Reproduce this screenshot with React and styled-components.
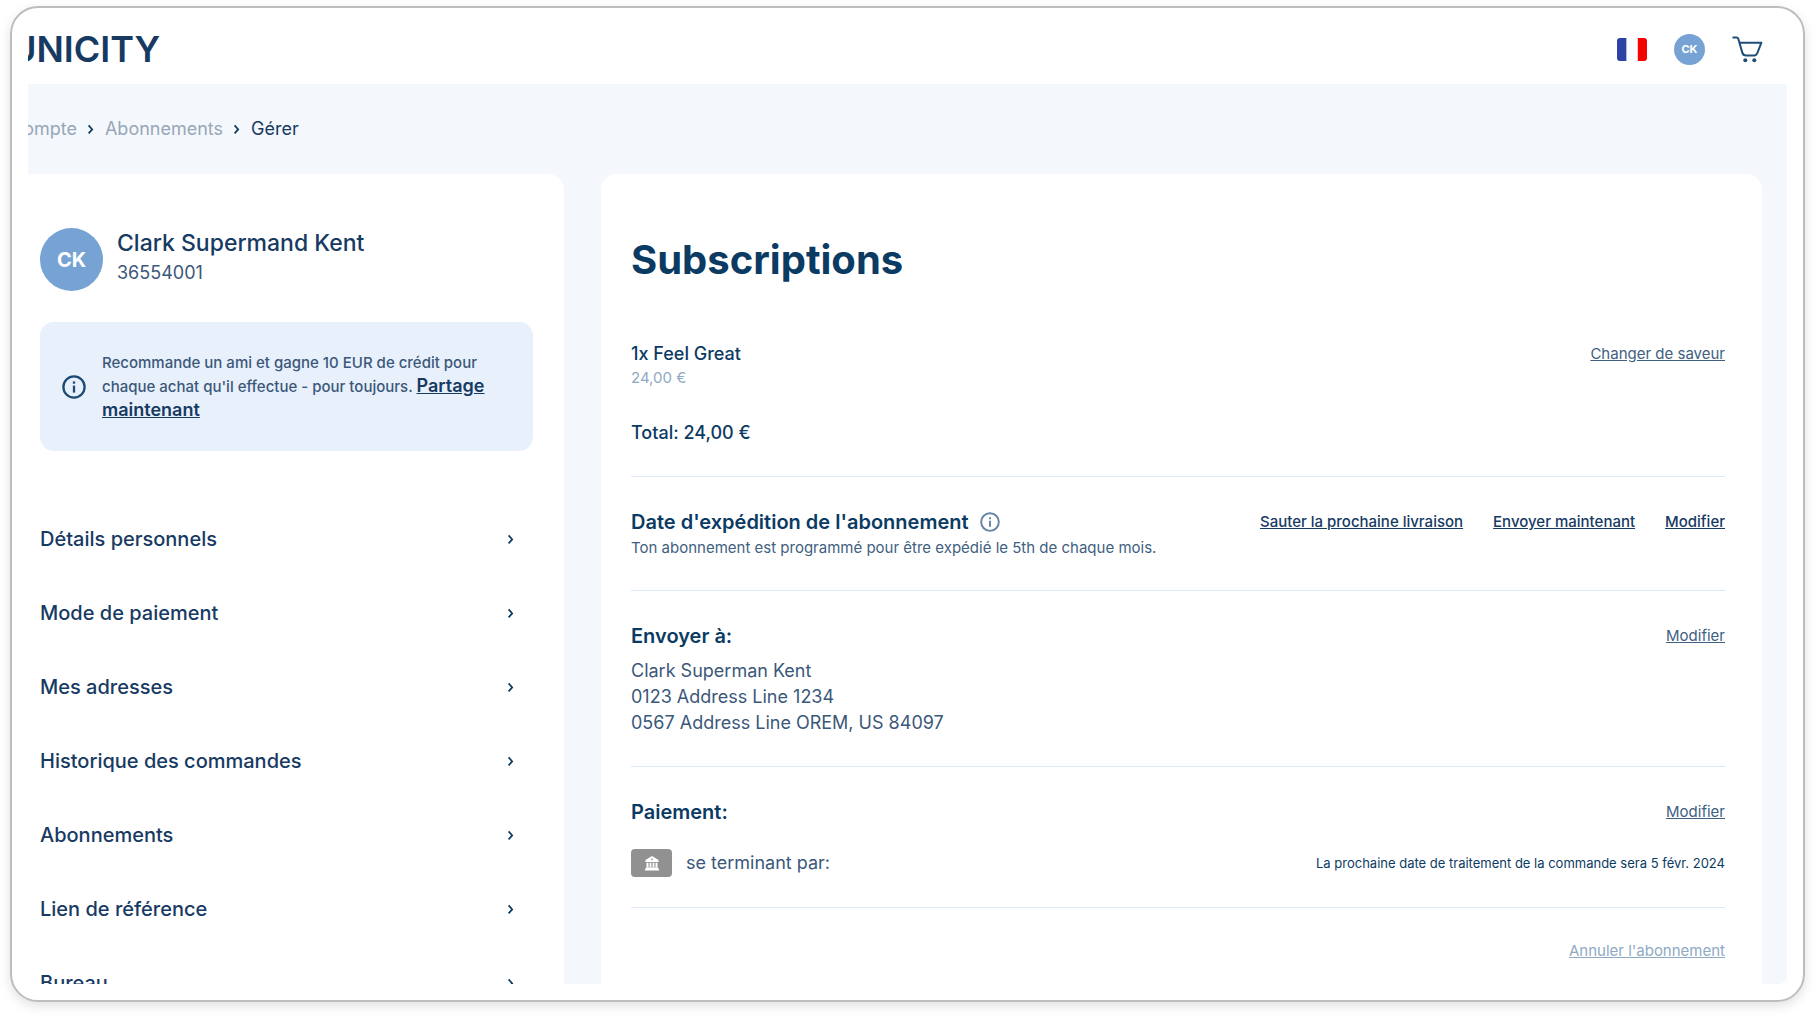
import React from 'react';
import styled, { createGlobalStyle } from 'styled-components';

const navy = '#173a63';
const navyDeep = '#0b3b63';
const slate = '#3b587a';
const muted = '#8fa9c4';

const menuItems = [
  'Détails personnels',
  'Mode de paiement',
  'Mes adresses',
  'Historique des commandes',
  'Abonnements',
  'Lien de référence',
  'Bureau',
];

const address = [
  'Clark Superman Kent',
  '0123 Address Line 1234',
  '0567 Address Line OREM, US 84097',
];

const GlobalStyle = createGlobalStyle`
  * {
    box-sizing: border-box;
  }

  body {
    margin: 0;
    background: #fff;
    color: ${navy};
    font-family: Inter, "Liberation Sans", sans-serif;
  }

  h1, h2, h3, p, ul, ol, address {
    margin: 0;
    padding: 0;
    font-style: normal;
    list-style: none;
  }

  button {
    padding: 0;
    border: none;
    background: none;
    color: inherit;
    font-family: inherit;
    cursor: pointer;
  }

  svg {
    display: block;
    flex-shrink: 0;
  }
`;

const ChevronIcon = () => (
  <svg width="8" height="12" viewBox="0 0 8 12" fill="none" stroke={navyDeep} strokeWidth="1.7">
    <path d="M1.6 2.4 L5.2 6.4 L1.6 10.4" />
  </svg>
);

const InfoIcon = ({ size, color }) => (
  <svg width={size} height={size} viewBox="0 0 24 24" fill="none" stroke={color} strokeWidth="2.3">
    <circle cx="12" cy="12" r="10.6" />
    <path d="M12 10.6 V17.6" />
    <path d="M12 6.4 V8.7" />
  </svg>
);

const FlagIcon = () => (
  <svg width="30" height="23" viewBox="0 0 30 23">
    <path d="M3 0 H9.6 V23 H3 A3 3 0 0 1 0 20 V3 A3 3 0 0 1 3 0 Z" fill="#2e42a5" />
    <path d="M9.6 0 H20.8 V23 H9.6 Z" fill="#f7fcff" />
    <path d="M20.8 0 H27 A3 3 0 0 1 30 3 V20 A3 3 0 0 1 27 23 H20.8 Z" fill="#f50100" />
  </svg>
);

const CartIcon = () => (
  <svg width="31" height="27" viewBox="0 0 31 27" fill="none" stroke="#1f4e79" strokeWidth="2">
    <path d="M0.5 1.5 H4.6 Q5.9 1.5 6.3 2.8 L10.3 16.6 Q11.1 19.4 14 19.4 H22.2 Q24.4 19.4 25.3 17.2 L29.4 6.7 H7.5" strokeLinejoin="round" />
    <circle cx="13.3" cy="24.3" r="2" fill="#1f4e79" stroke="none" />
    <circle cx="22.3" cy="24.3" r="2" fill="#1f4e79" stroke="none" />
  </svg>
);

const BankIcon = () => (
  <svg width="14" height="15" viewBox="0 0 14 15" fill="#fff">
    <path d="M7 0 L13.5 4 V6 H0.5 V4 Z" />
    <path d="M1.5 6.8 H3.5 V11.4 H1.5 Z M4.6 6.8 H6.4 V11.4 H4.6 Z M7.6 6.8 H9.4 V11.4 H7.6 Z M10.5 6.8 H12.5 V11.4 H10.5 Z" />
    <path d="M0.8 11.6 H13.2 V12.8 H14 V14.4 H0 V12.8 H0.8 Z" />
    <circle cx="7" cy="3.4" r="0.8" fill="#919191" />
  </svg>
);

function App() {
  return (
    <Frame>
      <GlobalStyle />
      <Viewport>
        <Page>
          <Header>
            <Logo href="#">UNICITY</Logo>
            <HeaderActions>
              <button type="button" aria-label="France"><FlagIcon /></button>
              <Avatar as="button" type="button" $size={31} $font={11}>CK</Avatar>
              <button type="button" aria-label="Panier"><CartIcon /></button>
            </HeaderActions>
          </Header>
          <Main>
            <Breadcrumb aria-label="breadcrumb">
              <Crumb href="#">Compte</Crumb>
              <ChevronIcon />
              <Crumb href="#">Abonnements</Crumb>
              <ChevronIcon />
              <Crumb href="#" $current aria-current="page">Gérer</Crumb>
            </Breadcrumb>
            <Columns>
              <Sidebar>
                <Profile>
                  <Avatar $size={63} $font={20}>CK</Avatar>
                  <div>
                    <ProfileName>Clark Supermand Kent</ProfileName>
                    <ProfileId>36554001</ProfileId>
                  </div>
                </Profile>
                <Notice>
                  <InfoIcon size={24} color="#1b4a75" />
                  <p>
                    Recommande un ami et gagne 10 EUR de crédit pour chaque achat qu'il effectue - pour toujours.{' '}
                    <a href="#">Partage maintenant</a>
                  </p>
                </Notice>
                <ul>
                  {menuItems.map((item) => (
                    <li key={item}>
                      <MenuLink href="#">
                        {item}
                        <ChevronIcon />
                      </MenuLink>
                    </li>
                  ))}
                </ul>
              </Sidebar>
              <Content>
                <Title>Subscriptions</Title>
                <Section $first>
                  <Row>
                    <Product>1x Feel Great</Product>
                    <TextLink href="#">Changer de saveur</TextLink>
                  </Row>
                  <Price>24,00 €</Price>
                  <Total>Total: 24,00 €</Total>
                </Section>
                <Section>
                  <Row>
                    <SectionTitle>
                      Date d'expédition de l'abonnement
                      <InfoIcon size={20} color="#6485a5" />
                    </SectionTitle>
                    <Links>
                      <TextLink href="#" $strong>Sauter la prochaine livraison</TextLink>
                      <TextLink href="#" $strong>Envoyer maintenant</TextLink>
                      <TextLink href="#" $strong>Modifier</TextLink>
                    </Links>
                  </Row>
                  <Schedule>Ton abonnement est programmé pour être expédié le 5th de chaque mois.</Schedule>
                </Section>
                <Section>
                  <Row>
                    <SectionTitle>Envoyer à:</SectionTitle>
                    <TextLink href="#">Modifier</TextLink>
                  </Row>
                  <Address>
                    {address.map((line) => (
                      <div key={line}>{line}</div>
                    ))}
                  </Address>
                </Section>
                <Section>
                  <Row>
                    <SectionTitle>Paiement:</SectionTitle>
                    <TextLink href="#">Modifier</TextLink>
                  </Row>
                  <PaymentRow>
                    <Payment>
                      <BankBadge><BankIcon /></BankBadge>
                      se terminant par:
                    </Payment>
                    <NextDate>La prochaine date de traitement de la commande sera 5 févr. 2024</NextDate>
                  </PaymentRow>
                </Section>
                <Footer>
                  <TextLink href="#" $muted>Annuler l'abonnement</TextLink>
                </Footer>
              </Content>
            </Columns>
          </Main>
        </Page>
      </Viewport>
    </Frame>
  );
}

const Frame = styled.div`
  display: flex;
  height: calc(100vh - 20px);
  margin: 6px 11px 14px 10px;
  padding: 0 16px 16px;
  border: 2px solid #bdbdbd;
  border-radius: 28px;
  box-shadow: 0 4px 12px rgba(0, 0, 0, 0.12);
`;

const Viewport = styled.div`
  flex: 1;
  min-width: 0;
  overflow: hidden;
  border-bottom-right-radius: 8px;
`;

/* the page is scrolled slightly to the right inside its window */
const Page = styled.div`
  display: flex;
  flex-direction: column;
  min-height: 100%;
  margin-left: -18px;
`;

const Header = styled.header`
  display: flex;
  align-items: center;
  justify-content: space-between;
  height: 76px;
  padding: 6px 24px 0 0;
`;

const Logo = styled.a`
  color: ${navy};
  font-size: 36px;
  font-weight: 600;
  line-height: 40px;
  text-decoration: none;
`;

const HeaderActions = styled.div`
  display: flex;
  align-items: center;
  gap: 27px;
`;

const Avatar = styled.div`
  display: flex;
  align-items: center;
  justify-content: center;
  flex-shrink: 0;
  width: ${props => props.$size}px;
  height: ${props => props.$size}px;
  border-radius: 50%;
  background: #76a3d3;
  color: #fff;
  font-size: ${props => props.$font}px;
  font-weight: 700;
`;

const Main = styled.main`
  display: flex;
  flex-direction: column;
  flex: 1;
  padding-right: 25px;
  background: #f4f8fc;
`;

const Breadcrumb = styled.nav`
  display: flex;
  align-items: center;
  gap: 10px;
  height: 90px;
`;

const Crumb = styled.a`
  color: ${props => props.$current ? navy : '#97a6b8'};
  font-size: 18px;
  line-height: 24px;
  text-decoration: none;
`;

const Columns = styled.div`
  display: grid;
  grid-template-columns: 554px minmax(0, 1fr);
  gap: 37px;
  flex: 1;
`;

const Card = styled.div`
  border-radius: 16px 16px 0 0;
  background: #fff;
`;

const Sidebar = styled(Card)`
  padding: 54px 31px 0 30px;
`;

const Profile = styled.div`
  display: flex;
  gap: 14px;
`;

const ProfileName = styled.h2`
  font-size: 23px;
  font-weight: 500;
  line-height: 30px;
`;

const ProfileId = styled.p`
  color: ${slate};
  font-size: 18px;
  line-height: 30px;
`;

const Notice = styled.div`
  display: flex;
  align-items: center;
  gap: 16px;
  min-height: 129px;
  margin: 31px 0 51px;
  padding: 0 30px 0 22px;
  border-radius: 14px;
  background: #e8f0fb;

  p {
    color: ${slate};
    font-size: 15px;
    font-weight: 500;
    line-height: 22px;
  }

  a {
    color: ${navy};
    font-size: 18px;
    font-weight: 600;
    line-height: 24px;
  }
`;

const MenuLink = styled.a`
  display: flex;
  align-items: center;
  justify-content: space-between;
  height: 74px;
  padding-right: 18px;
  color: ${navy};
  font-size: 20px;
  font-weight: 500;
  text-decoration: none;
`;

const Content = styled(Card)`
  padding: 56px 37px 0 30px;
  color: ${navyDeep};
`;

const Title = styled.h1`
  font-size: 40px;
  font-weight: 700;
  line-height: 60px;
`;

const Section = styled.section`
  padding: ${props => props.$first ? 52 : 31}px 0 30px;
  border-bottom: 1px solid #dce9f7;
`;

const Row = styled.div`
  display: flex;
  align-items: center;
  justify-content: space-between;
`;

const Product = styled.h3`
  font-size: 18px;
  font-weight: 500;
  line-height: 24px;
`;

const Price = styled.p`
  color: ${muted};
  font-size: 15px;
  line-height: 24px;
`;

const Total = styled.p`
  margin-top: 30px;
  font-size: 18px;
  font-weight: 500;
  line-height: 26px;
`;

const SectionTitle = styled.h3`
  display: flex;
  align-items: center;
  gap: 11px;
  font-size: 20px;
  font-weight: 600;
  line-height: 28px;
`;

const Links = styled.div`
  display: flex;
  gap: 30px;
`;

const TextLink = styled.a`
  color: ${props => props.$muted ? muted : props.$strong ? navy : '#41607f'};
  font-size: 15px;
  font-weight: ${props => props.$strong ? 500 : 400};
  line-height: 24px;
`;

const Schedule = styled.p`
  color: #41607f;
  font-size: 15px;
  line-height: 24px;
`;

const Address = styled.address`
  margin-top: 8px;
  color: ${slate};
  font-size: 18px;
  line-height: 26px;
`;

const PaymentRow = styled(Row)`
  margin-top: 23px;
`;

const Payment = styled.div`
  display: flex;
  align-items: center;
  gap: 14px;
  color: ${slate};
  font-size: 18px;
  line-height: 28px;
`;

const BankBadge = styled.span`
  display: flex;
  align-items: center;
  justify-content: center;
  width: 41px;
  height: 28px;
  border-radius: 4px;
  background: #919191;
`;

const NextDate = styled.p`
  font-size: 13px;
  line-height: 20px;
`;

const Footer = styled.footer`
  display: flex;
  justify-content: flex-end;
  padding: 31px 0;
`;

export default App;
